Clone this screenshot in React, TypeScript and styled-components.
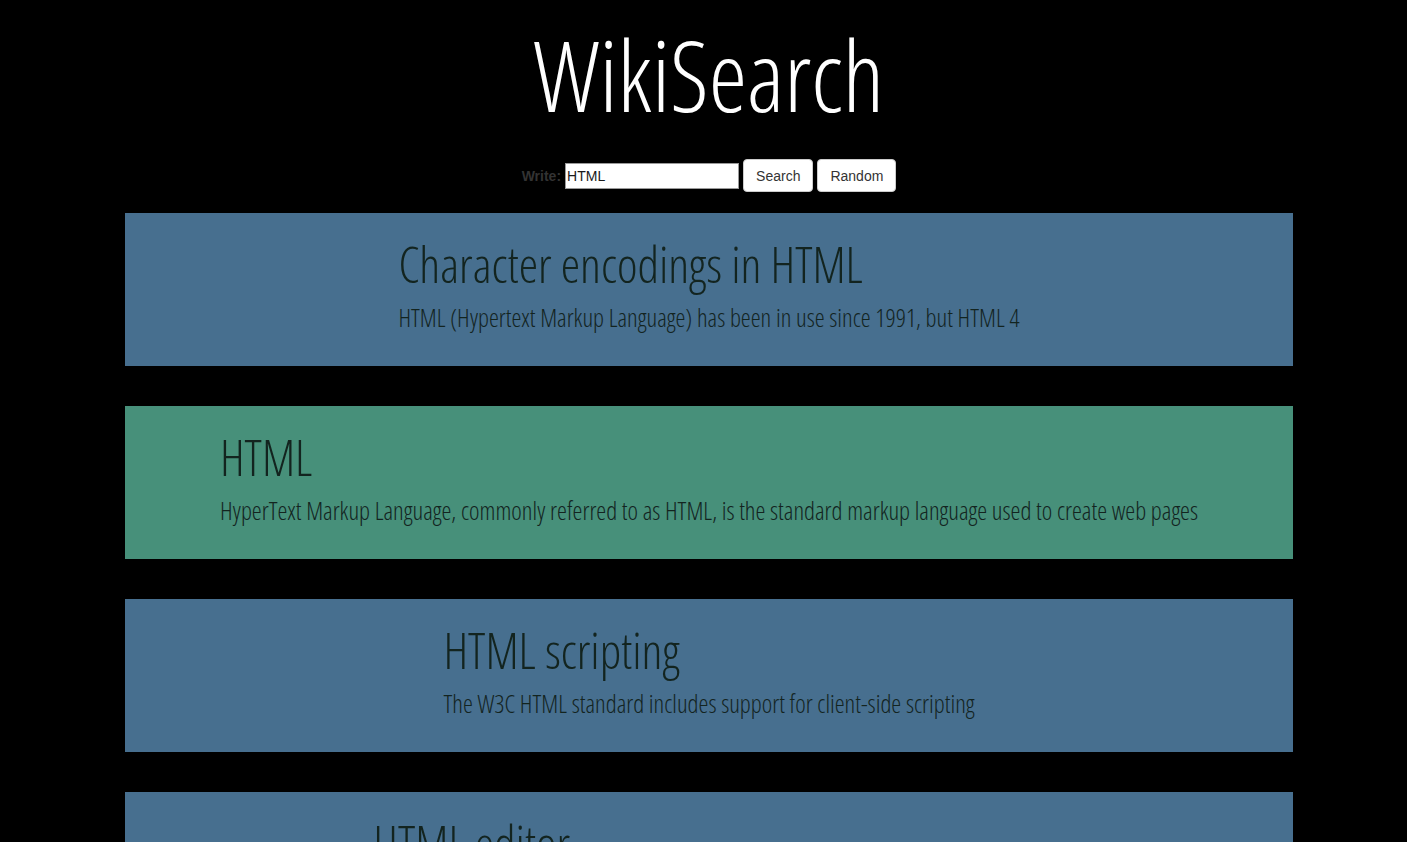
import React from "react";
import styled, { createGlobalStyle } from "styled-components";

const Global = createGlobalStyle`
  html, body { margin: 0; padding: 0; background: #000; }
  body { font-family: "Open Sans", "DejaVu Sans", sans-serif; overflow: hidden; }
`;

const Page = styled.div`
  box-sizing: border-box;
  display: flex;
  flex-direction: column;
  align-items: center;
  width: 1407px;
  height: 842px;
  padding-left: 11px;
  overflow: hidden;
`;

const Title = styled.h1`
  margin: 14px 0 0 0;
  color: #fff;
  font-family: "Open Sans", sans-serif;
  font-weight: 300;
  font-stretch: 75%;
  font-size: 97px;
  line-height: 120px;
`;

const Form = styled.form`
  display: flex;
  align-items: center;
  gap: 4px;
  margin-top: 25px;
  height: 33px;
  font-family: "Liberation Sans", Arial, sans-serif;
  font-size: 14px;
`;

const Label = styled.label`
  color: #333;
  font-weight: bold;
`;

const Input = styled.input`
  box-sizing: border-box;
  width: 174px;
  height: 26px;
  border: 1px solid #9a9a9a;
  padding: 1px 1px;
  font-family: "Liberation Sans", Arial, sans-serif;
  font-size: 14px;
  color: #1a1a1a;
  outline: none;
`;

const Button = styled.button`
  box-sizing: border-box;
  height: 33px;
  padding: 0 12px;
  background: #fff;
  border: 1px solid #ccc;
  border-radius: 4px;
  color: #333;
  font-family: "Liberation Sans", Arial, sans-serif;
  font-size: 14px;
`;

const List = styled.div`
  display: flex;
  flex-direction: column;
  gap: 40px;
  margin-top: 21px;
  width: 1168px;
`;

const Card = styled.div<{ $tone: "blue" | "green" }>`
  box-sizing: border-box;
  height: 153px;
  flex-shrink: 0;
  background: ${(p) => (p.$tone === "green" ? "#47907a" : "#476f8f")};
  display: flex;
  justify-content: center;
  padding-top: 16px;
`;

const Content = styled.div`
  text-align: left;
  color: #13241f;
  font-family: "Open Sans", sans-serif;
  font-weight: 300;
  font-stretch: 75%;
`;

const CardTitle = styled.div`
  font-size: 49px;
  line-height: 70px;
`;

const CardText = styled.div`
  font-size: 25px;
  line-height: 36px;
`;

const results = [
  {
    tone: "blue" as const,
    title: "Character encodings in HTML",
    text: "HTML (Hypertext Markup Language) has been in use since 1991, but HTML 4",
  },
  {
    tone: "green" as const,
    title: "HTML",
    text: "HyperText Markup Language, commonly referred to as HTML, is the standard markup language used to create web pages",
  },
  {
    tone: "blue" as const,
    title: "HTML scripting",
    text: "The W3C HTML standard includes support for client-side scripting",
  },
  {
    tone: "blue" as const,
    title: "HTML editor",
    text: "An HTML editor is a computer program for editing HTML, the markup of a webpage",
  },
];

export default function App() {
  return (
    <Page>
      <Global />
      <Title>WikiSearch</Title>
      <Form onSubmit={(e) => e.preventDefault()}>
        <Label htmlFor="q">Write:</Label>
        <Input id="q" defaultValue="HTML" />
        <Button type="submit">Search</Button>
        <Button type="button">Random</Button>
      </Form>
      <List>
        {results.map((r) => (
          <Card key={r.title} $tone={r.tone}>
            <Content>
              <CardTitle>{r.title}</CardTitle>
              <CardText>{r.text}</CardText>
            </Content>
          </Card>
        ))}
      </List>
    </Page>
  );
}
